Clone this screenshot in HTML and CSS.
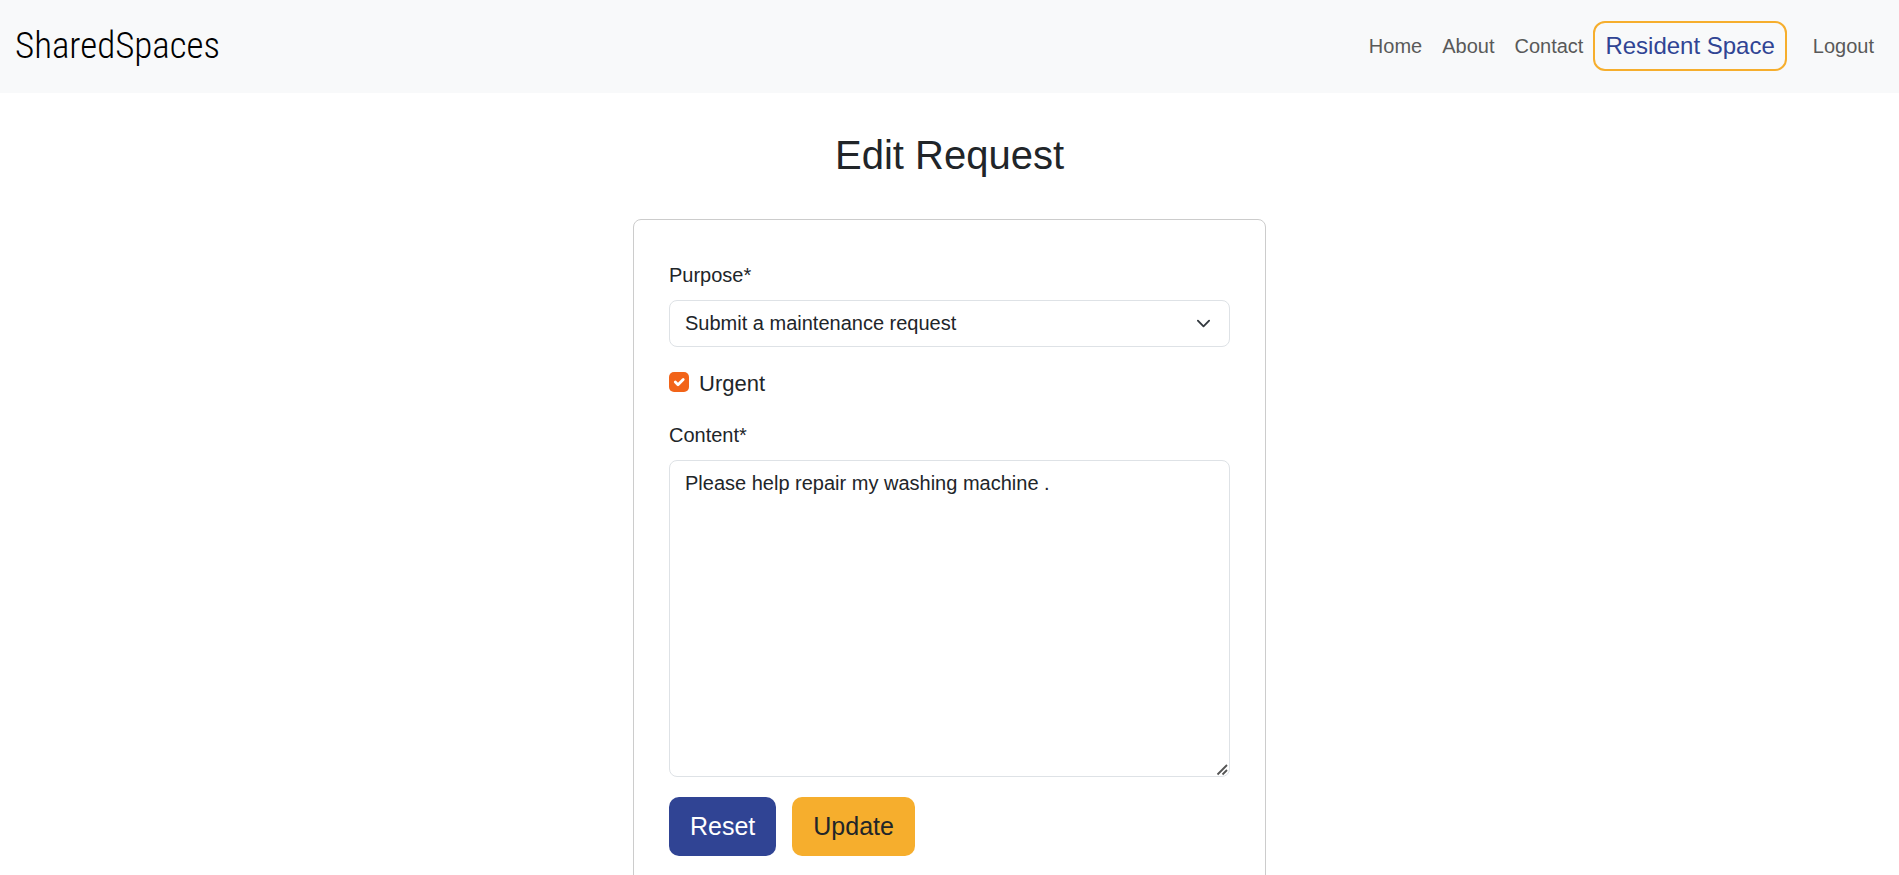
FILE: index.html
```html
<!DOCTYPE html>
<html lang="en">
<head>
  <meta charset="utf-8">
  <meta name="viewport" content="width=device-width, initial-scale=1">
  <title>Edit Request - SharedSpaces</title>
  <link rel="stylesheet" href="styles.css">
</head>
<body>
  <header class="navbar">
    <a class="brand" href="#">SharedSpaces</a>
    <nav class="nav">
      <a class="nav-link" href="#">Home</a>
      <a class="nav-link" href="#">About</a>
      <a class="nav-link" href="#">Contact</a>
      <a class="nav-link nav-link-space" href="#">Resident Space</a>
      <a class="nav-link" href="#">Logout</a>
    </nav>
  </header>
  <main class="page">
    <h1 class="title">Edit Request</h1>
    <form class="card">
      <div class="field">
        <label for="purpose">Purpose*</label>
        <select class="control select" id="purpose">
          <option selected>Submit a maintenance request</option>
        </select>
      </div>
      <div class="check">
        <input class="check-input" type="checkbox" id="urgent" checked>
        <label for="urgent">Urgent</label>
      </div>
      <div class="field">
        <label for="content">Content*</label>
        <textarea class="control textarea" id="content">Please help repair my washing machine .</textarea>
      </div>
      <div class="actions">
        <button class="btn btn-reset" type="reset">Reset</button>
        <button class="btn btn-update" type="submit">Update</button>
      </div>
    </form>
  </main>
</body>
</html>
```
FILE: styles.css
```css
* {
  box-sizing: border-box;
}

body {
  margin: 0;
  background: #fff;
  color: #212529;
  font: 20px/30px "Liberation Sans", Arial, sans-serif;
}

.navbar {
  display: flex;
  align-items: center;
  justify-content: space-between;
  min-height: 93px;
  padding: 0 15px 2px;
  background: #f8f9fa;
}

.brand {
  color: #000;
  font: 300 37px/48px "Roboto Condensed", "Liberation Sans Narrow", "Liberation Sans", sans-serif;
  text-decoration: none;
}

.nav {
  display: flex;
  align-items: center;
}

.nav-link {
  padding: 10px;
  color: #595959;
  text-decoration: none;
}

.nav-link-space {
  margin-right: 16px;
  padding: 8px 10px;
  border: 2px solid #f6ae2d;
  border-radius: 12px;
  color: #304494;
  font-size: 24px;
}

.page {
  padding: 38px 0 40px;
}

.title {
  margin: 0 0 40px;
  font-size: 40px;
  font-weight: 400;
  line-height: 48px;
  text-align: center;
}

.card {
  display: flex;
  flex-direction: column;
  gap: 20px;
  width: 33.3333%;
  margin: 0 auto;
  padding: 40px 35px;
  border: 1px solid #ccc;
  border-radius: 8px;
}

.field {
  display: flex;
  flex-direction: column;
  gap: 10px;
}

.control {
  width: 100%;
  padding: 7px 15px;
  border: 1px solid #dee2e6;
  border-radius: 8px;
  background-color: #fff;
  color: inherit;
  font: inherit;
}

.select {
  height: 47px;
  padding: 6px 15px 8px;
  appearance: none;
  background-image: url("data:image/svg+xml,%3Csvg xmlns='http://www.w3.org/2000/svg' viewBox='0 0 16 16'%3E%3Cpath fill='none' stroke='%23343a40' stroke-linecap='round' stroke-linejoin='round' stroke-width='2' d='m2 5 6 6 6-6'/%3E%3C/svg%3E");
  background-repeat: no-repeat;
  background-position: right 18px center;
  background-size: 15px 15px;
}

.check {
  display: flex;
  align-items: flex-start;
  gap: 10px;
  font-size: 22px;
  line-height: 33px;
}

.check-input {
  width: 20px;
  height: 20px;
  margin: 5px 0 0;
  appearance: none;
  border-radius: 5px;
  background: #f26419 url("data:image/svg+xml,%3Csvg xmlns='http://www.w3.org/2000/svg' viewBox='0 0 20 20'%3E%3Cpath fill='none' stroke='%23fff' stroke-linecap='round' stroke-linejoin='round' stroke-width='2.8' d='m6.3 10 2.7 2.7 5.2-5.2'/%3E%3C/svg%3E") center / 20px 20px no-repeat;
}

.textarea {
  display: block;
  height: 317px;
  resize: vertical;
}

.textarea::-webkit-resizer {
  background: url("data:image/svg+xml,%3Csvg xmlns='http://www.w3.org/2000/svg' viewBox='0 0 15 15'%3E%3Cpath fill='none' stroke='%23555' stroke-width='1.8' d='M3.5 13.5l9.5-9.5M8.5 13.5l4.5-4.5'/%3E%3C/svg%3E") right bottom / 15px 15px no-repeat;
}

.actions {
  display: flex;
  gap: 16px;
}

.btn {
  padding: 10px 21px;
  border: 0;
  border-radius: 10px;
  font: 25px/39px "Liberation Sans", Arial, sans-serif;
}

.btn-reset {
  background: #304494;
  color: #fff;
}

.btn-update {
  background: #f6ae2d;
  color: #212529;
}
```
